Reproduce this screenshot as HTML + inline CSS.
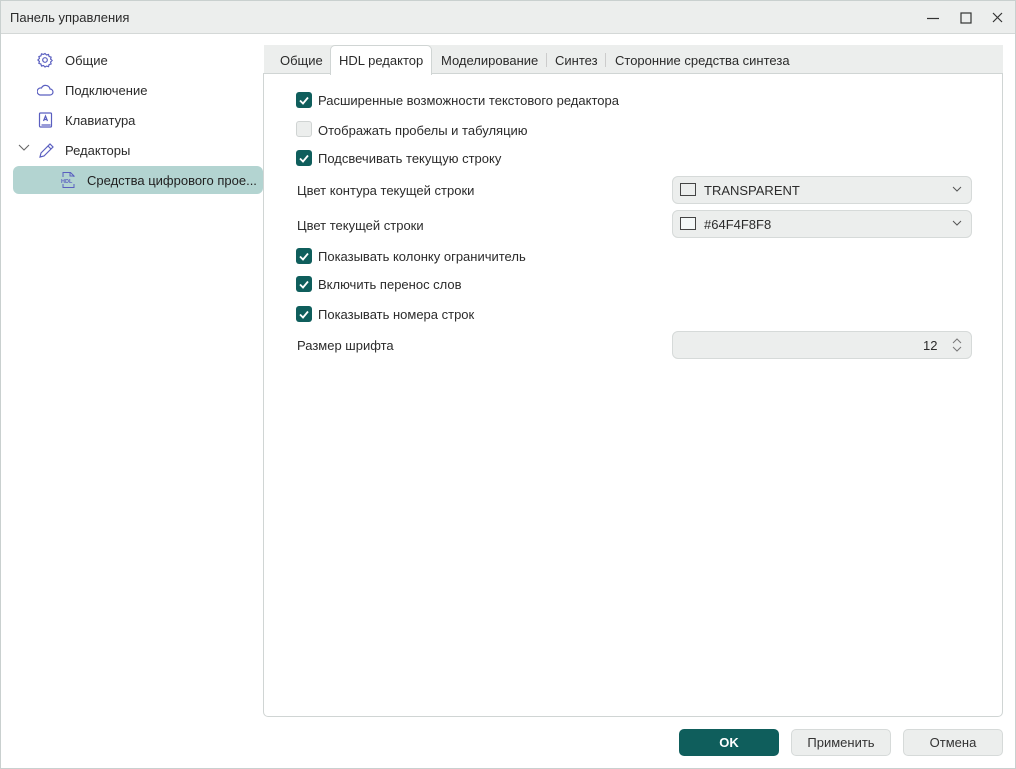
<!DOCTYPE html>
<html><head><meta charset="utf-8"><style>
*{box-sizing:border-box;margin:0;padding:0}
body{width:1016px;height:769px;background:#fff;font-family:"Liberation Sans",sans-serif;font-size:13px;color:#2b2b2b;position:relative;overflow:hidden}
.a{position:absolute}
.win{left:0;top:0;width:1016px;height:769px;border:1px solid #c9d0cf}
.title{left:1px;top:1px;width:1014px;height:33px;background:#eceeed;border-bottom:1px solid #d4d8d7}
.t{position:absolute;white-space:nowrap}
.cb{position:absolute;width:16px;height:16px;border-radius:3px;background:#0f5e5c}
.cb.off{background:#eceeed;border:1px solid #d0d4d3}
.sel{position:absolute;left:672px;width:300px;height:28px;background:#eceeed;border:1px solid #d6dad9;border-radius:6px}
.btn{position:absolute;top:729px;width:100px;height:27px;border-radius:5px;background:#eceeed;border:1px solid #d6dad9;text-align:center;line-height:25px;color:#333}
</style></head><body>
<div class="a win"></div>
<div class="a title"></div>
<div class="t" style="left:10px;top:10px">Панель управления</div>
<svg class="a" style="left:925px;top:10px" width="80" height="16"><line x1="2" y1="8.5" x2="14" y2="8.5" stroke="#333" stroke-width="1.2"/><rect x="36" y="3" width="10" height="10" fill="none" stroke="#333" stroke-width="1.2"/><path d="M68 3l9 9M77 3l-9 9" stroke="#333" stroke-width="1.2"/></svg>

<svg class="a" style="left:37px;top:51px" width="18" height="120" fill="none" stroke="#5a5fc0" stroke-width="1.2">
<circle cx="8" cy="9" r="2.3"/><path d="M8 2.5l1.5 1.5 2-.5.6 2 2 .6-.5 2 1.5 1.4-1.5 1.5.5 2-2 .6-.6 2-2-.5L8 16l-1.5-1.5-2 .5-.6-2-2-.6.5-2L.9 9l1.5-1.5-.5-2 2-.6.6-2 2 .5z"/>
<path d="M3 44h10a3 3 0 0 0 0-6 4.5 4.5 0 0 0-8.5-1A3.5 3.5 0 0 0 3 44z"/>
<rect x="2.5" y="62" width="12" height="14" rx="1"/><path d="M4.5 74h9M6.5 70l2-5 2 5M7.2 68.5h2.6"/>
<path d="M3 106l1-4 9-9 3 3-9 9z M11 95l3 3"/>
</svg>
<div class="t" style="left:65px;top:53px">Общие</div>
<div class="t" style="left:65px;top:83px">Подключение</div>
<div class="t" style="left:65px;top:113px">Клавиатура</div>
<svg class="a" style="left:18px;top:143px" width="14" height="10"><path d="M1 2l5 5 5-5" fill="none" stroke="#666" stroke-width="1.1"/></svg>
<div class="t" style="left:65px;top:143px">Редакторы</div>
<div class="a" style="left:13px;top:166px;width:250px;height:28px;background:#b3d4d1;border-radius:6px"></div>
<svg class="a" style="left:60px;top:171px" width="18" height="18" fill="none" stroke="#5a5fc0" stroke-width="1"><path d="M3 6V1.5h7.5L14 5v1M3 13v3.5h11V13M10 1.5V5h4"/><text x="1" y="12" font-size="5.5" fill="#5a5fc0" stroke="none" font-family="Liberation Sans" font-weight="bold">HDL</text></svg>
<div class="t" style="left:87px;top:173px;color:#222">Средства цифрового прое...</div>

<div class="a" style="left:264px;top:45px;width:739px;height:29px;background:#eceeed"></div>
<div class="a" style="left:263px;top:73px;width:740px;height:644px;border:1px solid #d0d5d4;border-radius:0 0 5px 5px;background:#fff"></div>
<div class="a" style="left:330px;top:45px;width:102px;height:30px;background:#fff;border:1px solid #d0d5d4;border-bottom:none;border-radius:5px 5px 0 0"></div>
<div class="t" style="left:280px;top:53px">Общие</div>
<div class="t" style="left:339px;top:53px">HDL редактор</div>
<div class="t" style="left:441px;top:53px">Моделирование</div>
<div class="a" style="left:546px;top:53px;width:1px;height:14px;background:#ccc"></div>
<div class="t" style="left:555px;top:53px">Синтез</div>
<div class="a" style="left:605px;top:53px;width:1px;height:14px;background:#ccc"></div>
<div class="t" style="left:615px;top:53px">Сторонние средства синтеза</div>

<div class="cb" style="left:296px;top:92px"></div><div class="t" style="left:318px;top:93px">Расширенные возможности текстового редактора</div>
<div class="cb off" style="left:296px;top:121px"></div><div class="t" style="left:318px;top:123px">Отображать пробелы и табуляцию</div>
<div class="cb" style="left:296px;top:150px"></div><div class="t" style="left:318px;top:151px">Подсвечивать текущую строку</div>
<div class="t" style="left:297px;top:183px">Цвет контура текущей строки</div>
<div class="t" style="left:297px;top:218px">Цвет текущей строки</div>
<div class="cb" style="left:296px;top:248px"></div><div class="t" style="left:318px;top:249px">Показывать колонку ограничитель</div>
<div class="cb" style="left:296px;top:276px"></div><div class="t" style="left:318px;top:277px">Включить перенос слов</div>
<div class="cb" style="left:296px;top:306px"></div><div class="t" style="left:318px;top:307px">Показывать номера строк</div>
<div class="t" style="left:297px;top:338px">Размер шрифта</div>
<svg class="a" style="left:296px;top:92px" width="16" height="240" fill="none" stroke="#fff" stroke-width="1.8"><path d="M4 8.5l3 3 5-6"/><path d="M4 66.5l3 3 5-6"/><path d="M4 164.5l3 3 5-6"/><path d="M4 192.5l3 3 5-6"/><path d="M4 222.5l3 3 5-6"/></svg>

<div class="sel" style="top:176px"></div>
<div class="a" style="left:680px;top:183px;width:16px;height:13px;border:1px solid #444"></div>
<div class="t" style="left:704px;top:183px">TRANSPARENT</div>
<div class="sel" style="top:210px"></div>
<div class="a" style="left:680px;top:217px;width:16px;height:13px;border:1px solid #444;background:#f4f8f8"></div>
<div class="t" style="left:704px;top:217px">#64F4F8F8</div>
<svg class="a" style="left:952px;top:186px" width="10" height="40" fill="none" stroke="#555" stroke-width="1"><path d="M1 2l4 4 4-4M1 36l4 4 4-4" transform="translate(0,-1)"/></svg>
<div class="sel" style="top:331px"></div>
<div class="t" style="left:923px;top:338px">12</div>
<svg class="a" style="left:951px;top:337px" width="12" height="16" fill="none" stroke="#777" stroke-width="1"><path d="M2 6l4-4 4 4M2 10l4 4 4-4"/></svg>

<div class="btn" style="left:679px;background:#0f5e5c;border-color:#0f5e5c;color:#fff;font-weight:bold">OK</div>
<div class="btn" style="left:791px">Применить</div>
<div class="btn" style="left:903px">Отмена</div>
</body></html>
